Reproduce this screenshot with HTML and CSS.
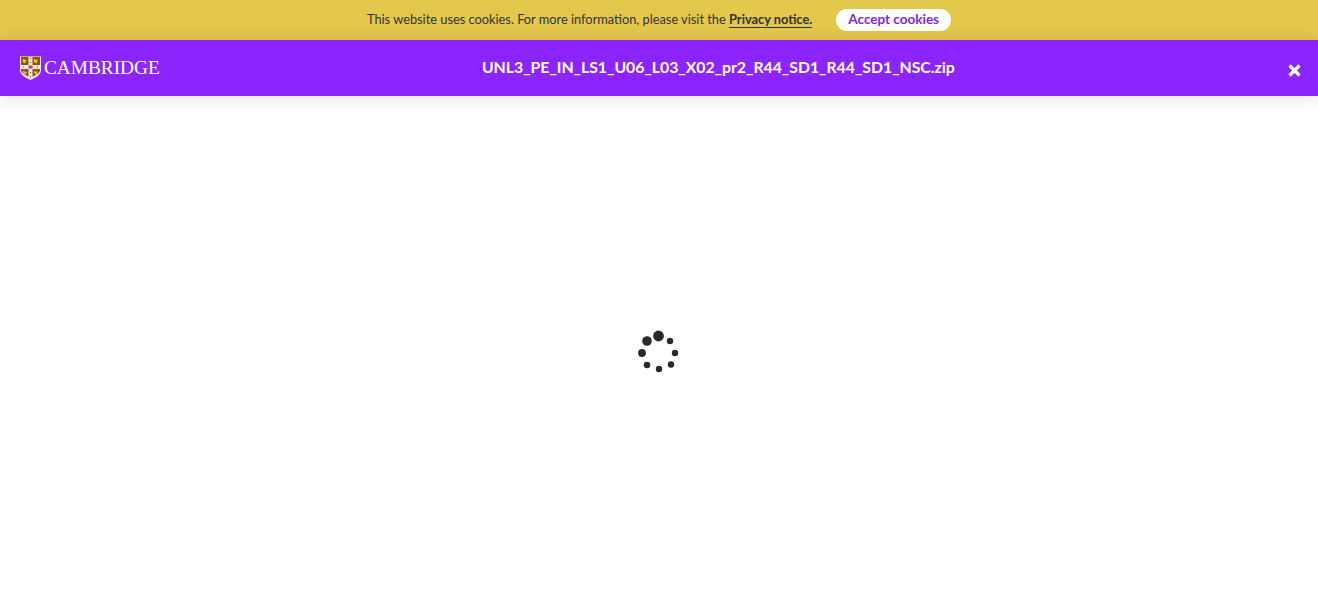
FILE: index.html
```html
<!DOCTYPE html>
<html lang="en-US">
  <head>
    <title>UNL3_PE_IN_LS1_U06_L03_X02_pr2_R44_SD1_R44_SD1_NSC.zip</title>
    <meta name="viewport" content="width=device-width, initial-scale=1" />
    <link rel="stylesheet" href="styles.css">
  </head>
  <body>
    <div class="cookie-bar">
      <p class="cookie-text">This website uses cookies. For more information, please visit the <a href="#" class="cookie-link">Privacy notice.</a></p>
      <button type="button" class="cookie-accept">Accept cookies</button>
    </div>
    <header class="top-bar">
      <a href="#" class="logo">
        <svg class="crest" viewBox="0 0 21 24" width="21" height="24" aria-hidden="true">
          <path d="M0 0H21V14C21 19 15 22 10.500 24C6 22 0 19 0 14Z" fill="#f0e6e2" />
          <path d="M1 1H8.500V9H1ZM12.500 1H20V9H12.500Z" fill="#8a5312" />
          <path d="M1 13H8.500V20.500C5 19 1 17 1 14ZM12.500 13H20V14C20 17 16 19 12.500 20.500Z" fill="#96501a" />
          <path d="M3 3L6.500 4L5 7.500L2.500 6ZM14 3L18 4L16.500 7.500L14 6ZM3 15L7 16L5.500 18.500L3 17ZM14 15L18 16L16.500 18.500L14 17Z" fill="#e8c12f" />
          <path d="M8.500 9.500H12.500V12.500H8.500Z" fill="#cf4334" />
          <path d="M10 2H11V3H10ZM10 6H11V7H10ZM3 10.500H4V11.500H3ZM17 10.500H18V11.500H17ZM10 16H11V17H10ZM10 20H11V21H10Z" fill="#55504c" />
          <path d="M0 0H21V1H0Z" fill="#e8958a" />
        </svg>
        <span class="logo-text">CAMBRIDGE</span>
      </a>
      <h1 class="file-name">UNL3_PE_IN_LS1_U06_L03_X02_pr2_R44_SD1_R44_SD1_NSC.zip</h1>
      <button type="button" class="close" aria-label="Close">
        <svg viewBox="0 0 13 13" width="13" height="13" aria-hidden="true">
          <path d="M1.500 1.500L11.500 11.500M11.500 1.500L1.500 11.500" stroke="#fff" stroke-width="3.200" />
        </svg>
      </button>
    </header>
    <main class="viewer">
      <svg class="spinner" viewBox="0 0 44 44" width="44" height="44" aria-label="Loading">
        <circle cx="20.500" cy="6" r="5.400" />
        <circle cx="9" cy="11" r="4.800" />
        <circle cx="4" cy="23" r="3.900" />
        <circle cx="9" cy="35" r="3.300" />
        <circle cx="21" cy="39" r="3.200" />
        <circle cx="33" cy="34.500" r="3.200" />
        <circle cx="37" cy="23" r="3.200" />
        <circle cx="32" cy="11" r="3.200" />
      </svg>
    </main>
  </body>
</html>
```

FILE: styles.css
```css
html,
body {
  height: 100%;
}
body {
  margin: 0;
  display: flex;
  flex-direction: column;
  font-family: Lato, "Noto Sans", sans-serif;
  background: #fff;
  overflow: hidden;
}
.cookie-bar {
  height: 40px;
  display: flex;
  justify-content: center;
  align-items: center;
  gap: 24px;
  background: #e4c84b;
  color: #333;
  font-size: 12.800px;
}
.cookie-text {
  margin: 0 0 2px;
}
.cookie-link {
  color: #333;
  font-weight: 700;
  text-decoration: none;
  border-bottom: 1px solid #333;
}
.cookie-accept {
  height: 22px;
  padding: 0 12px 2px;
  border: 0;
  border-radius: 11px;
  background: #fff;
  color: #7a28ef;
  font-family: inherit;
  font-size: 13.500px;
  font-weight: 700;
}
.top-bar {
  height: 56px;
  display: flex;
  align-items: center;
  background: #8c24fd;
  color: #fff;
  box-shadow: 0 2px 18px rgba(0, 0, 0, 0.12);
}
.logo {
  display: flex;
  align-items: center;
  gap: 3px;
  margin-left: 20px;
  color: #fff;
  text-decoration: none;
}
.logo-text {
  margin-bottom: 1px;
  font-family: "Liberation Serif", serif;
  font-size: 19.300px;
}
.file-name {
  flex: 1;
  margin: 0 0 4px;
  text-align: center;
  font-size: 15.800px;
  font-weight: 700;
}
.close {
  display: flex;
  margin: 4px 17px 0 11px;
  padding: 0;
  border: 0;
  background: none;
}
.viewer {
  flex: 1;
  display: flex;
  justify-content: center;
  align-items: center;
  padding: 0 0 1px 2px;
}
.spinner {
  fill: #2a2a2e;
}
```
